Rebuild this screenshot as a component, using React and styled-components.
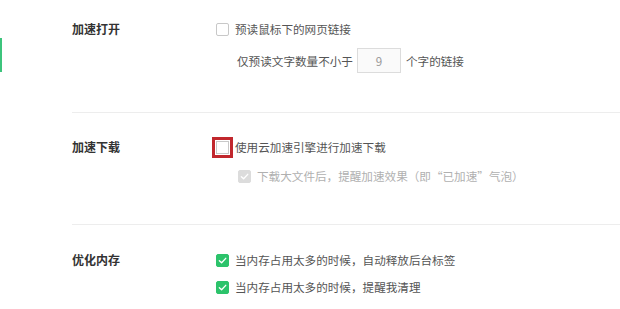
import React from "react";
import styled, { createGlobalStyle } from "styled-components";

const GlobalStyle = createGlobalStyle`
  html, body {
    margin: 0;
    padding: 0;
    background: #fff;
  }
  body {
    font-family: "Noto Sans CJK SC", "Microsoft YaHei", sans-serif;
    font-size: 11.6px;
    color: #555;
  }
`;

const Page = styled.div`
  display: flex;
  width: 620px;
  height: 309px;
  overflow: hidden;
`;

const Nav = styled.div`
  width: 3px;
  padding-top: 38px;
  flex-shrink: 0;
`;

const ActiveMarker = styled.div`
  width: 2px;
  height: 34px;
  background: #3cc47c;
`;

const Content = styled.div`
  flex: 1;
  padding-left: 69px;
`;

const Section = styled.div`
  display: flex;
  padding: ${(p) => p.$pad};
  border-bottom: ${(p) => (p.$last ? "none" : "1px solid #ededed")};
`;

const Label = styled.div`
  width: 144px;
  flex-shrink: 0;
  height: 22px;
  line-height: 22px;
  font-weight: 700;
  color: #333;
  font-size: 12px;
`;

const Options = styled.div`
  display: flex;
  flex-direction: column;
  gap: ${(p) => p.$gap}px;
`;

const Row = styled.label`
  display: flex;
  align-items: center;
  min-height: 22px;
  padding-left: ${(p) => (p.$indent ? 22 : 0)}px;
  color: ${(p) => (p.$disabled ? "#b0b0b0" : "#555")};
  white-space: nowrap;
`;

const Box = styled.span`
  width: 13px;
  height: 13px;
  box-sizing: border-box;
  border-radius: ${(p) => (p.$highlight ? 0 : 2)}px;
  margin-right: 6px;
  display: inline-flex;
  align-items: center;
  justify-content: center;
  flex-shrink: 0;
  background: ${(p) =>
    p.$checked ? (p.$disabled ? "#dcdcdc" : "#2cc36b") : "#fff"};
  border: 1px solid
    ${(p) => (p.$checked ? (p.$disabled ? "#dcdcdc" : "#2cc36b") : "#c8c8c8")};
  outline: ${(p) => (p.$highlight ? "3px solid #c1272d" : "none")};
  outline-offset: 1px;
`;

const Plain = styled.span`
  display: flex;
  align-items: center;
  min-height: 22px;
  padding-left: 21px;
  white-space: nowrap;
  color: #555;
`;

const NumberInput = styled.div`
  width: 44px;
  height: 25px;
  box-sizing: border-box;
  border: 1px solid #dcdcdc;
  background: #fafafa;
  color: #999;
  display: flex;
  align-items: center;
  justify-content: center;
  margin: 0 5px 0 4px;
`;

const Check = ({ checked, disabled, highlight }) => (
  <Box $checked={checked} $disabled={disabled} $highlight={highlight}>
    {checked && (
      <svg width="9" height="9" viewBox="0 0 10 10">
        <path
          d="M1.5 5.2 L4 7.5 L8.6 2.6"
          fill="none"
          stroke="#fff"
          strokeWidth="1.5"
          strokeLinecap="round"
          strokeLinejoin="round"
        />
      </svg>
    )}
  </Box>
);

export default function App() {
  return (
    <Page>
      <GlobalStyle />
      <Nav>
        <ActiveMarker />
      </Nav>
      <Content>
        <Section $pad="18px 0 39px">
          <Label>加速打开</Label>
          <Options $gap={8}>
            <Row>
              <Check />
              预读鼠标下的网页链接
            </Row>
            <Plain>
              仅预读文字数量不小于
              <NumberInput>9</NumberInput>
              个字的链接
            </Plain>
          </Options>
        </Section>
        <Section $pad="23px 0 37px">
          <Label>加速下载</Label>
          <Options $gap={7}>
            <Row>
              <Check highlight />
              使用云加速引擎进行加速下载
            </Row>
            <Row $indent $disabled>
              <Check checked disabled />
              下载大文件后，提醒加速效果（即“已加速”气泡）
            </Row>
          </Options>
        </Section>
        <Section $pad="24px 0 0" $last>
          <Label>优化内存</Label>
          <Options $gap={5}>
            <Row>
              <Check checked />
              当内存占用太多的时候，自动释放后台标签
            </Row>
            <Row>
              <Check checked />
              当内存占用太多的时候，提醒我清理
            </Row>
          </Options>
        </Section>
      </Content>
    </Page>
  );
}
